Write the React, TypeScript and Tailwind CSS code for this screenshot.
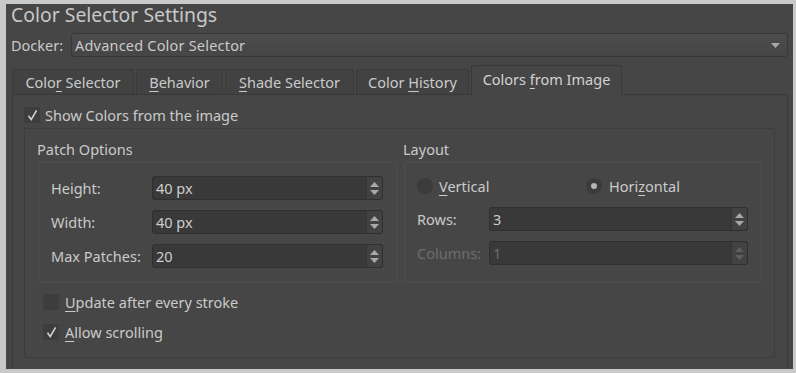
import React from 'react';

const font = { fontFamily: '"Noto Sans", "DejaVu Sans", sans-serif' };

function U({ children }: { children: React.ReactNode }) {
  return <span className="underline underline-offset-[3px] decoration-1">{children}</span>;
}

function Check({ checked }: { checked: boolean }) {
  return (
    <div className="w-[16px] h-[16px] bg-[#3d3d3d] rounded-[2px] flex items-center justify-center shrink-0">
      {checked && (
        <svg width="13" height="13" viewBox="0 0 12 12">
          <path d="M2.3 6.3 L4.8 9.8 L9.8 1.2" fill="none" stroke="#d2d2d2" strokeWidth="1.5" />
        </svg>
      )}
    </div>
  );
}

function Radio({ checked }: { checked: boolean }) {
  return (
    <div className="w-[16px] h-[16px] rounded-full bg-[#3b3b3b] flex items-center justify-center shrink-0">
      {checked && <div className="w-[6px] h-[6px] rounded-full bg-[#b4b4b4]" />}
    </div>
  );
}

function SpinBox({ value, width, disabled }: { value: string; width: string; disabled?: boolean }) {
  return (
    <div className={`${width} h-[24px] flex bg-[#393939] border border-[#2f2f2f] rounded-[3px]`}>
      <div className={`flex-1 flex items-center pl-[3px] pt-[2px] ${disabled ? 'text-[#6d6d6d]' : 'text-[#cdcdcd]'}`}>{value}</div>
      <div className="w-[16px] flex flex-col items-center justify-center gap-[3px] bg-[#424242] border-l border-[#353535] rounded-r-[3px]">
        <svg width="9" height="5" viewBox="0 0 9 5">
          <path d="M0 5 L4.5 0 L9 5 Z" fill={disabled ? '#5e5e5e' : '#a8a8a8'} />
        </svg>
        <svg width="9" height="5" viewBox="0 0 9 5">
          <path d="M0 0 L4.5 5 L9 0 Z" fill={disabled ? '#5e5e5e' : '#a8a8a8'} />
        </svg>
      </div>
    </div>
  );
}

const tabs = [
  { w: 'w-[122px]', label: <>Colo<U>r</U> Selector</> },
  { w: 'w-[87px]', label: <><U>B</U>ehavior</> },
  { w: 'w-[129px]', label: <><U>S</U>hade Selector</> },
  { w: 'w-[113px]', label: <>Color <U>H</U>istory</> },
];

export default function App() {
  return (
    <div className="w-[796px] h-[373px] bg-[#c9c9c9] pt-[4px] pl-[6px] pr-[3px] pb-[4px] overflow-hidden text-[14.5px]" style={font}>
      <div className="w-full h-full bg-[#464646] text-[#cacaca] flex flex-col">
        {/* Title */}
        <div className="h-[22px] leading-[22px] pl-[5px] text-[19.4px] text-[#c8c8c8]">Color Selector Settings</div>

        {/* Docker row */}
        <div className="mt-[7px] h-[24px] flex items-center pl-[5px] pr-[5px]">
          <div className="w-[60px] pt-[2px]">Docker:</div>
          <div className="flex-1 h-[24px] flex items-center justify-between bg-gradient-to-b from-[#4c4c4c] to-[#464646] border border-[#383838] rounded-[3px] pl-[3px] pr-[7px]">
            <span className="tracking-[0.2px] pt-[2px]">Advanced Color Selector</span>
            <svg width="9" height="5" viewBox="0 0 9 5">
              <path d="M0 0 L4.5 5 L9 0 Z" fill="#a8a8a8" />
            </svg>
          </div>
        </div>

        {/* Tabs */}
        <div className="mt-[8px] h-[29px] flex items-end gap-[2px] pl-[6px]">
          {tabs.map((t, i) => (
            <div
              key={i}
              className={`${t.w} h-[25px] flex items-center justify-center bg-[#424242] border border-b-0 border-[#3a3a3a] rounded-t-[3px]`}
            >
              <span className="pt-[1px]">{t.label}</span>
            </div>
          ))}
          <div className="w-[151px] h-[30px] -mb-[1px] flex items-center justify-center bg-[#464646] border border-b-0 border-[#393939] rounded-t-[3px] relative z-10 text-[#d2d2d2] pb-[1px]">
            <span>Colors <U>f</U>rom Image</span>
          </div>
        </div>

        {/* Panel */}
        <div className="flex-1 min-h-0 overflow-hidden ml-[6px] mr-[5px] border border-b-0 border-[#393939] pl-[11px] pt-[12px] pr-[12px]">
          <div className="h-[16px] flex items-center gap-[5px]">
            <Check checked />
            <span className="pt-[2px]">Show Colors from the image</span>
          </div>

          <div className="mt-[5px] border border-[#3c3c3c] rounded-[2px] pl-[13px] pr-[11px] pt-[10px] pb-[17px]">
            <div className="flex gap-[7px]">
              {/* Patch options */}
              <div className="w-[359px] flex flex-col">
                <div className="h-[20px] leading-[20px] -ml-[1px]">Patch Options</div>
                <div className="mt-[3px] h-[121px] border border-[#4f4f4f] rounded-[2px] pl-[12px] pt-[13px] flex flex-col gap-[10px]">
                  {[
                    ['Height:', '40 px'],
                    ['Width:', '40 px'],
                    ['Max Patches:', '20'],
                  ].map(([l, v]) => (
                    <div key={l} className="flex items-center h-[24px]">
                      <div className="w-[101px] pt-[2px]">{l}</div>
                      <SpinBox value={v} width="w-[231px]" />
                    </div>
                  ))}
                </div>
              </div>

              {/* Layout */}
              <div className="w-[358px] flex flex-col">
                <div className="h-[20px] leading-[20px] -ml-[1px]">Layout</div>
                <div className="mt-[3px] h-[121px] border border-[#4f4f4f] rounded-[2px] pl-[12px] pt-[13px] flex flex-col">
                  <div className="h-[20px] flex items-center">
                    <div className="w-[169px] flex items-center gap-[6px]">
                      <Radio checked={false} />
                      <span className="pt-[2px]"><U>V</U>ertical</span>
                    </div>
                    <div className="flex items-center gap-[7px]">
                      <Radio checked />
                      <span className="pt-[2px]">Hori<U>z</U>ontal</span>
                    </div>
                  </div>
                  <div className="mt-[11px] h-[24px] flex items-center">
                    <div className="w-[72px] pt-[2px]">Rows:</div>
                    <SpinBox value="3" width="w-[259px]" />
                  </div>
                  <div className="mt-[10px] h-[24px] flex items-center">
                    <div className="w-[72px] pt-[2px] text-[#6d6d6d]">Columns:</div>
                    <SpinBox value="1" width="w-[259px]" disabled />
                  </div>
                </div>
              </div>
            </div>

            <div className="mt-[11px] ml-[5px] h-[16px] flex items-center gap-[6px]">
              <Check checked={false} />
              <span className="pt-[2px]"><U>U</U>pdate after every stroke</span>
            </div>
            <div className="mt-[14px] ml-[5px] h-[16px] flex items-center gap-[6px]">
              <Check checked />
              <span className="pt-[2px]"><U>A</U>llow scrolling</span>
            </div>
          </div>
        </div>
      </div>
    </div>
  );
}
